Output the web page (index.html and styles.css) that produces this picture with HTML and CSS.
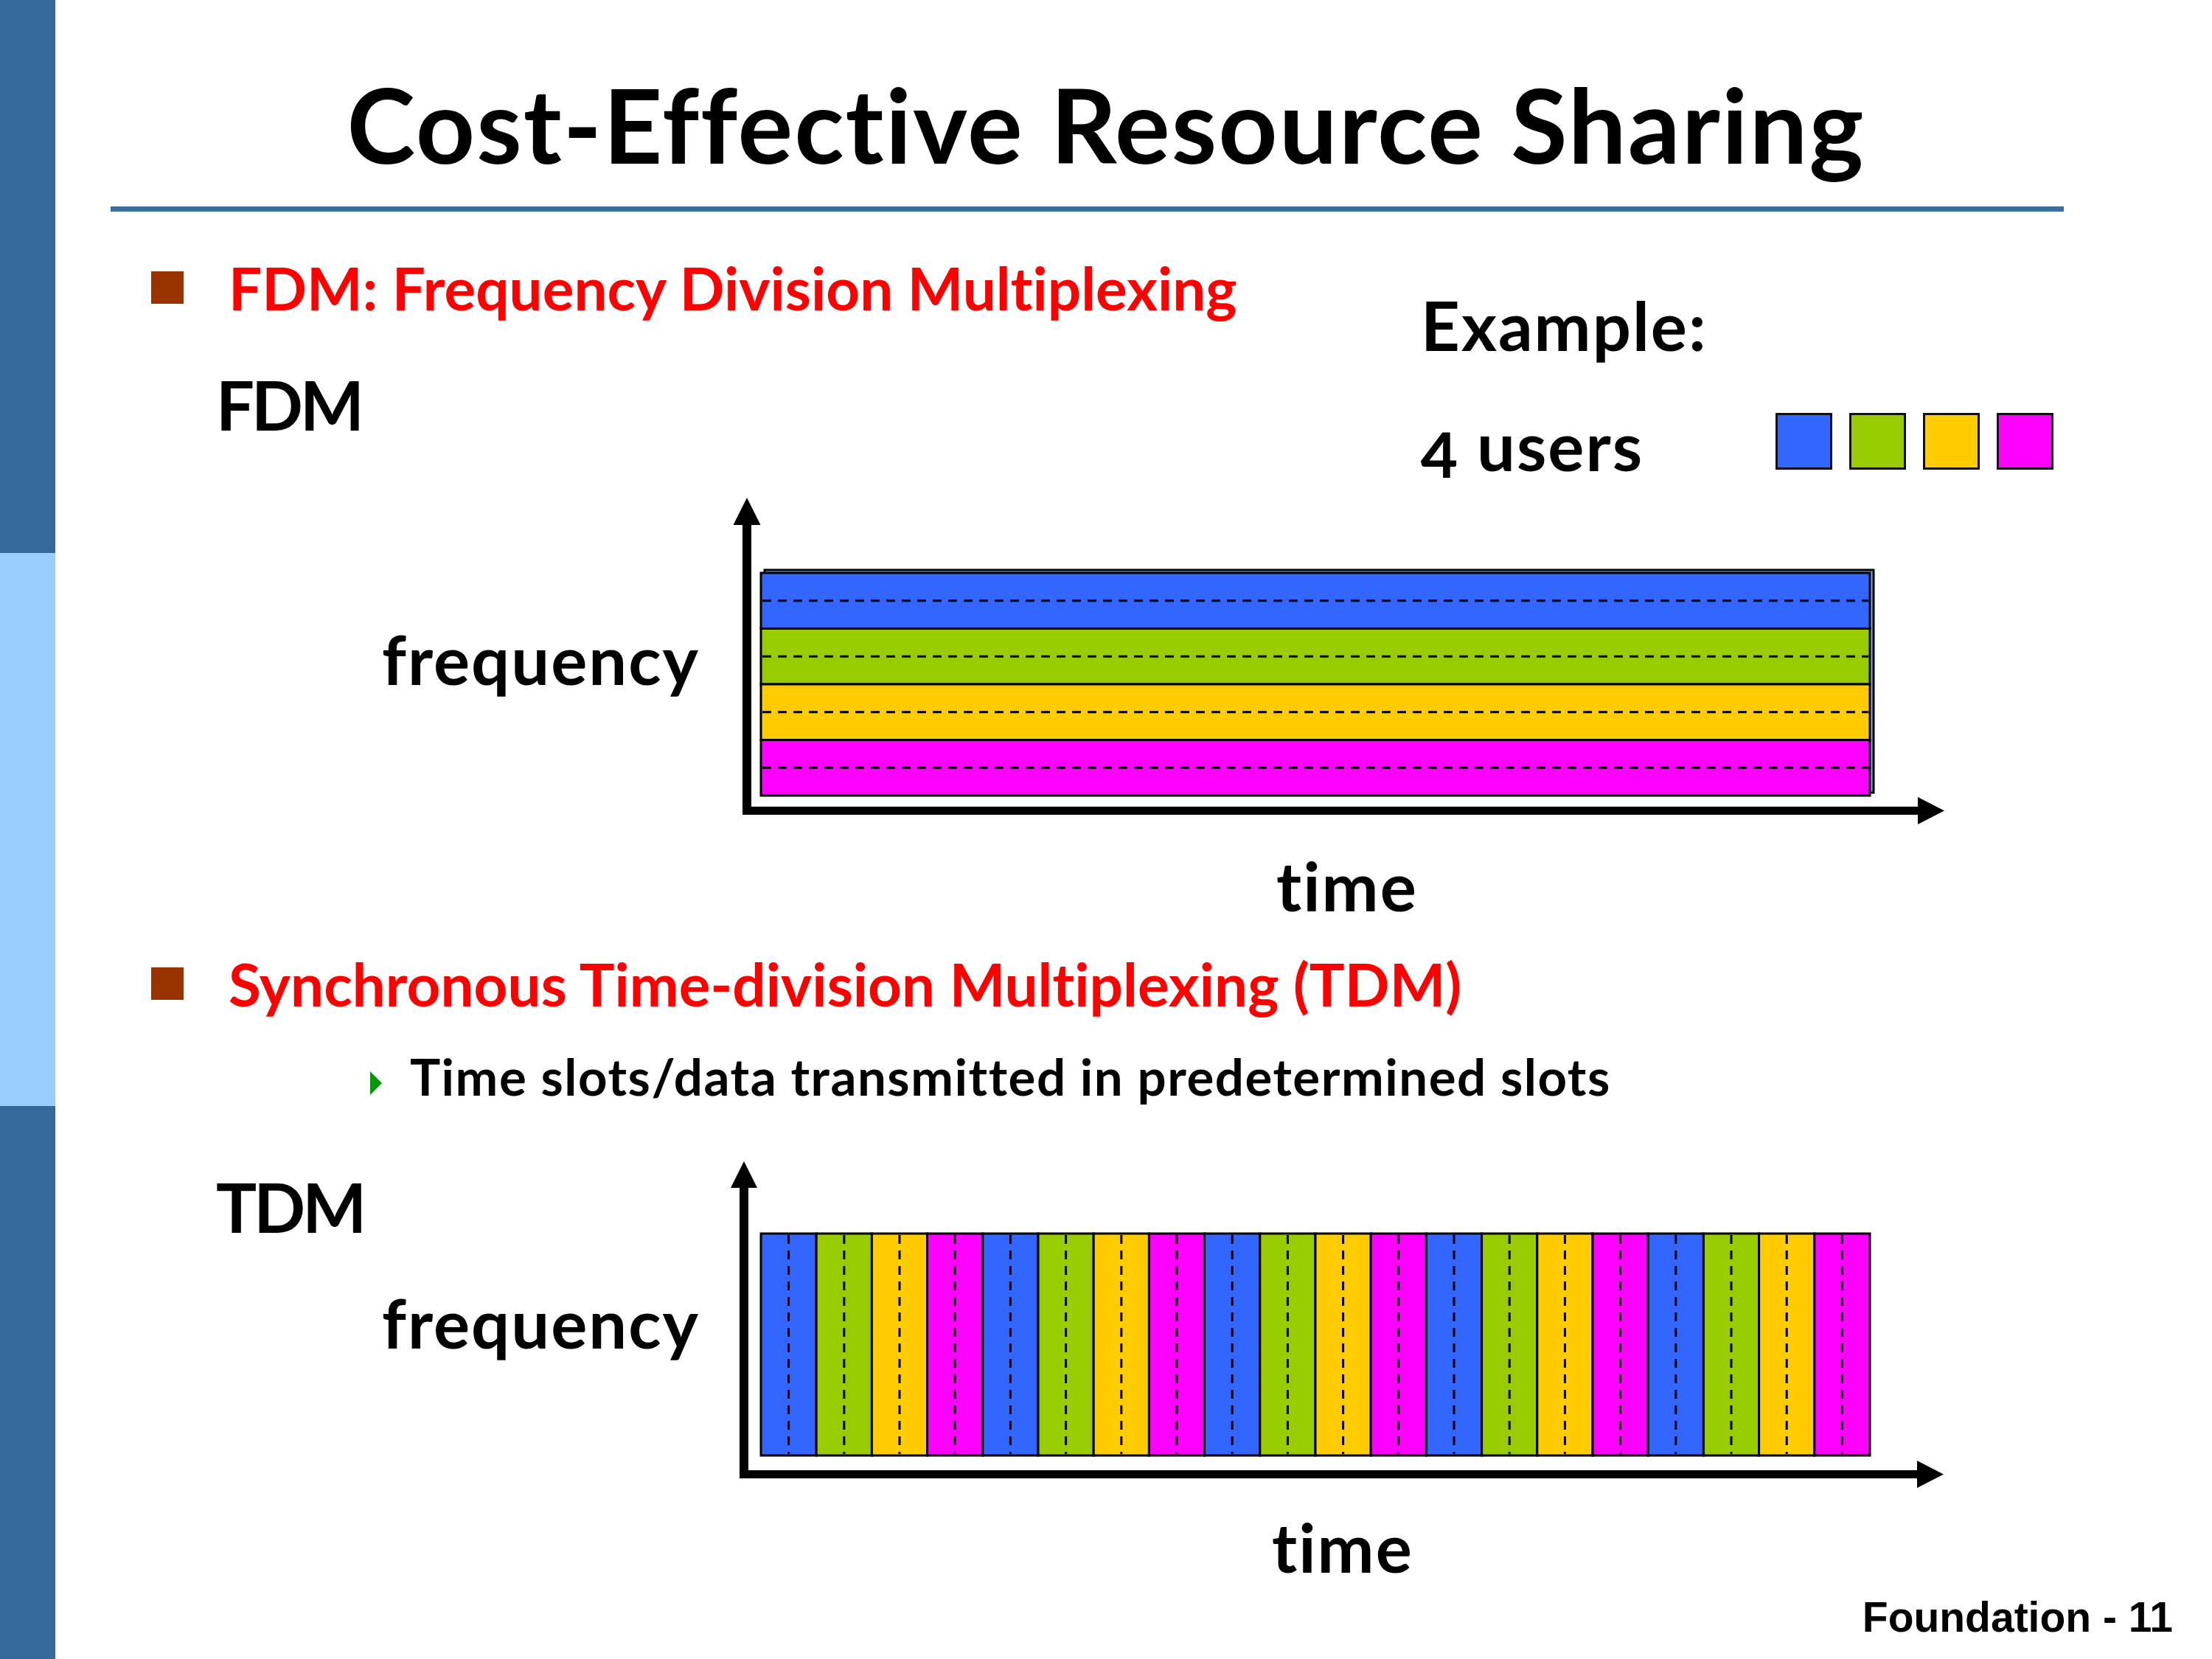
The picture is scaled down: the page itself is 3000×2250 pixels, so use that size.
FILE: index.html
```html
<!DOCTYPE html>
<html lang="en">
<head>
<meta charset="utf-8">
<title>Cost-Effective Resource Sharing</title>
<link rel="stylesheet" href="styles.css">
</head>
<body>
<div class="slide">
  <div class="sidebar">
    <div class="band dark"></div>
    <div class="band light"></div>
    <div class="band dark"></div>
  </div>
  <div class="main">
    <h1 class="title">Cost-Effective Resource Sharing</h1>
    <div class="rule"></div>

    <div class="fdm-head">
      <div class="col-left">
        <div class="bullet b1">
          <span class="sq"></span>
          <span class="btext">FDM: Frequency Division Multiplexing</span>
        </div>
        <div class="label caps fdm-label">FDM</div>
      </div>
      <div class="col-right">
        <div class="label example">Example:</div>
        <div class="users-row">
          <div class="label users">4 users</div>
          <div class="legend">
            <span class="lg blue"></span>
            <span class="lg green"></span>
            <span class="lg yellow"></span>
            <span class="lg magenta"></span>
          </div>
        </div>
      </div>
    </div>

    <div class="chart chart-fdm">
      <div class="labels">
        <div class="label freq">frequency</div>
      </div>
      <svg class="plot" width="1660" height="450" viewBox="0 0 1660 450">
        <rect class="shadow" x="47" y="98" width="1504" height="302"/>
        <rect class="f-blue" x="42" y="102" width="1504" height="75.5"/>
        <rect class="f-green" x="42" y="177.5" width="1504" height="75.5"/>
        <rect class="f-yellow" x="42" y="253" width="1504" height="75.5"/>
        <rect class="f-magenta" x="42" y="328.5" width="1504" height="75.5"/>
        <line class="dash" x1="44" y1="139.75" x2="1544" y2="139.75"/>
        <line class="dash" x1="44" y1="215.25" x2="1544" y2="215.25"/>
        <line class="dash" x1="44" y1="290.75" x2="1544" y2="290.75"/>
        <line class="dash" x1="44" y1="366.25" x2="1544" y2="366.25"/>
        <rect class="axis" x="17" y="36" width="12" height="394"/>
        <polygon class="axis" points="23,0 4.5,37 41.5,37"/>
        <rect class="axis" x="23" y="419" width="1589" height="11"/>
        <polygon class="axis" points="1611,406 1647,424.5 1611,443"/>
      </svg>
      <div class="label time t1">time</div>
    </div>

    <div class="bullet b2">
      <span class="sq"></span>
      <span class="btext">Synchronous Time-division Multiplexing (TDM)</span>
    </div>
    <div class="sub">
      <span class="tri"></span>
      <span class="stext">Time slots/data transmitted in predetermined slots</span>
    </div>

    <div class="chart chart-tdm">
      <div class="labels">
        <div class="label caps tdm-label">TDM</div>
        <div class="label freq freq2">frequency</div>
      </div>
      <svg class="plot" width="1660" height="450" viewBox="0 0 1660 450">
        <rect class="f-blue" x="42" y="98" width="75.2" height="301"/>
        <rect class="f-green" x="117.2" y="98" width="75.2" height="301"/>
        <rect class="f-yellow" x="192.4" y="98" width="75.2" height="301"/>
        <rect class="f-magenta" x="267.6" y="98" width="75.2" height="301"/>
        <rect class="f-blue" x="342.8" y="98" width="75.2" height="301"/>
        <rect class="f-green" x="418" y="98" width="75.2" height="301"/>
        <rect class="f-yellow" x="493.2" y="98" width="75.2" height="301"/>
        <rect class="f-magenta" x="568.4" y="98" width="75.2" height="301"/>
        <rect class="f-blue" x="643.6" y="98" width="75.2" height="301"/>
        <rect class="f-green" x="718.8" y="98" width="75.2" height="301"/>
        <rect class="f-yellow" x="794" y="98" width="75.2" height="301"/>
        <rect class="f-magenta" x="869.2" y="98" width="75.2" height="301"/>
        <rect class="f-blue" x="944.4" y="98" width="75.2" height="301"/>
        <rect class="f-green" x="1019.6" y="98" width="75.2" height="301"/>
        <rect class="f-yellow" x="1094.8" y="98" width="75.2" height="301"/>
        <rect class="f-magenta" x="1170" y="98" width="75.2" height="301"/>
        <rect class="f-blue" x="1245.2" y="98" width="75.2" height="301"/>
        <rect class="f-green" x="1320.4" y="98" width="75.2" height="301"/>
        <rect class="f-yellow" x="1395.6" y="98" width="75.2" height="301"/>
        <rect class="f-magenta" x="1470.8" y="98" width="75.2" height="301"/>
        <line class="dash" x1="79.6" y1="100" x2="79.6" y2="397"/>
        <line class="dash" x1="154.8" y1="100" x2="154.8" y2="397"/>
        <line class="dash" x1="230" y1="100" x2="230" y2="397"/>
        <line class="dash" x1="305.2" y1="100" x2="305.2" y2="397"/>
        <line class="dash" x1="380.4" y1="100" x2="380.4" y2="397"/>
        <line class="dash" x1="455.6" y1="100" x2="455.6" y2="397"/>
        <line class="dash" x1="530.8" y1="100" x2="530.8" y2="397"/>
        <line class="dash" x1="606" y1="100" x2="606" y2="397"/>
        <line class="dash" x1="681.2" y1="100" x2="681.2" y2="397"/>
        <line class="dash" x1="756.4" y1="100" x2="756.4" y2="397"/>
        <line class="dash" x1="831.6" y1="100" x2="831.6" y2="397"/>
        <line class="dash" x1="906.8" y1="100" x2="906.8" y2="397"/>
        <line class="dash" x1="982" y1="100" x2="982" y2="397"/>
        <line class="dash" x1="1057.2" y1="100" x2="1057.2" y2="397"/>
        <line class="dash" x1="1132.4" y1="100" x2="1132.4" y2="397"/>
        <line class="dash" x1="1207.6" y1="100" x2="1207.6" y2="397"/>
        <line class="dash" x1="1282.8" y1="100" x2="1282.8" y2="397"/>
        <line class="dash" x1="1358" y1="100" x2="1358" y2="397"/>
        <line class="dash" x1="1433.2" y1="100" x2="1433.2" y2="397"/>
        <line class="dash" x1="1508.4" y1="100" x2="1508.4" y2="397"/>
        <rect class="axis" x="13" y="35" width="12" height="395"/>
        <polygon class="axis" points="19,0 1,36 37,36"/>
        <rect class="axis" x="19" y="419" width="1592" height="11"/>
        <polygon class="axis" points="1610,406 1646,424.5 1610,443"/>
      </svg>
      <div class="label time t2">time</div>
    </div>

    <div class="footer">Foundation - 11</div>
  </div>
</div>
</body>
</html>
```

FILE: styles.css
```css
html, body {
  margin: 0;
  padding: 0;
  background: #ffffff;
}

.slide {
  width: 3000px;
  height: 2250px;
  display: grid;
  grid-template-columns: 75px 1fr;
  overflow: hidden;
  font-family: "Lato", "Open Sans", "Liberation Sans", sans-serif;
  font-weight: 700;
  color: #000000;
  font-variant-ligatures: none;
  font-feature-settings: "liga" 0, "clig" 0, "dlig" 0;
}

/* left decorative bar */
.sidebar {
  display: flex;
  flex-direction: column;
}
.band {
  flex: 1;
}
.band.dark {
  background: #35699b;
}
.band.light {
  background: #99ccff;
}

.main {
  min-width: 0;
}

.title {
  margin: 0;
  padding: 87px 75px 0 0;
  font-size: 140px;
  line-height: 162px;
  font-weight: 700;
  text-align: center;
  letter-spacing: 2px;
  white-space: nowrap;
}

.rule {
  margin: 31px 0 0 75px;
  width: 2649px;
  height: 7px;
  background: #3b6da1;
}

/* bullets */
.bullet {
  display: flex;
  align-items: flex-start;
  padding-left: 130px;
  gap: 61px;
  font-size: 80px;
  line-height: 94px;
  color: #ff0000;
  white-space: nowrap;
}
.bullet .sq {
  width: 44px;
  height: 44px;
  margin-top: 25px;
  background: #993300;
  flex: none;
}
.b1 {
  margin-top: 56px;
}
.b2 {
  margin-top: 33px;
}

.label {
  font-size: 92px;
  line-height: 107px;
  letter-spacing: 2px;
  white-space: nowrap;
}
.label.caps {
  letter-spacing: -4px;
}

/* FDM header area */
.fdm-head {
  display: flex;
  align-items: flex-start;
}
.col-left {
  width: 1852px;
  flex: none;
}
.fdm-label {
  margin-top: 58px;
  padding-left: 218px;
}
.col-right {
  flex: 1;
}
.example {
  margin-top: 100px;
}
.users-row {
  display: flex;
  align-items: flex-start;
  margin-top: 56px;
}
.users {
  width: 481px;
  flex: none;
  font-variant-numeric: oldstyle-nums;
}
.legend {
  display: flex;
  gap: 23px;
  margin-top: 10px;
}
.lg {
  width: 77px;
  height: 77px;
  box-sizing: border-box;
  border: 3px solid #111111;
}
.lg.blue { background: #3366ff; }
.lg.green { background: #99cc00; }
.lg.yellow { background: #ffcc00; }
.lg.magenta { background: #ff00ff; }

/* charts */
.chart {
  display: grid;
  grid-template-columns: 915px 1660px;
  grid-template-rows: 450px auto;
}
.chart-fdm {
  margin-top: 18px;
}
.chart-tdm {
  margin-top: 75px;
}
.labels {
  grid-column: 1;
  grid-row: 1;
  padding-left: 443px;
}
.chart-fdm .freq {
  margin-top: 165px;
}
.tdm-label {
  margin-top: 8px;
  margin-left: -225px;
}
.freq2 {
  margin-top: 50px;
}
.plot {
  grid-column: 2;
  grid-row: 1;
  display: block;
}
.time {
  grid-column: 2;
  grid-row: 2;
}
.t1 {
  margin-top: 22px;
  padding-left: 741px;
}
.t2 {
  margin-top: 19px;
  padding-left: 735px;
}

.plot .f-blue { fill: #3366ff; stroke: #000; stroke-width: 3; }
.plot .f-green { fill: #99cc00; stroke: #000; stroke-width: 3; }
.plot .f-yellow { fill: #ffcc00; stroke: #000; stroke-width: 3; }
.plot .f-magenta { fill: #ff00ff; stroke: #000; stroke-width: 3; }
.plot .shadow { fill: #7fb2e5; stroke: #000; stroke-width: 3; }
.plot .dash {
  stroke: #000;
  stroke-width: 3;
  stroke-dasharray: 12 9;
}
.plot .axis { fill: #000; }

/* sub bullet */
.sub {
  display: flex;
  align-items: flex-start;
  margin-top: 39px;
  padding-left: 427px;
  gap: 38px;
  font-size: 69px;
  line-height: 80px;
  letter-spacing: 1.5px;
  white-space: nowrap;
}
.tri {
  flex: none;
  width: 0;
  height: 0;
  margin-top: 33px;
  border-top: 16.5px solid transparent;
  border-bottom: 16.5px solid transparent;
  border-left: 16px solid #009900;
}

.footer {
  margin-top: 10px;
  padding-right: 53px;
  text-align: right;
  font-family: "Liberation Sans", Arial, sans-serif;
  font-weight: 700;
  font-size: 57px;
  line-height: 64px;
}
```
